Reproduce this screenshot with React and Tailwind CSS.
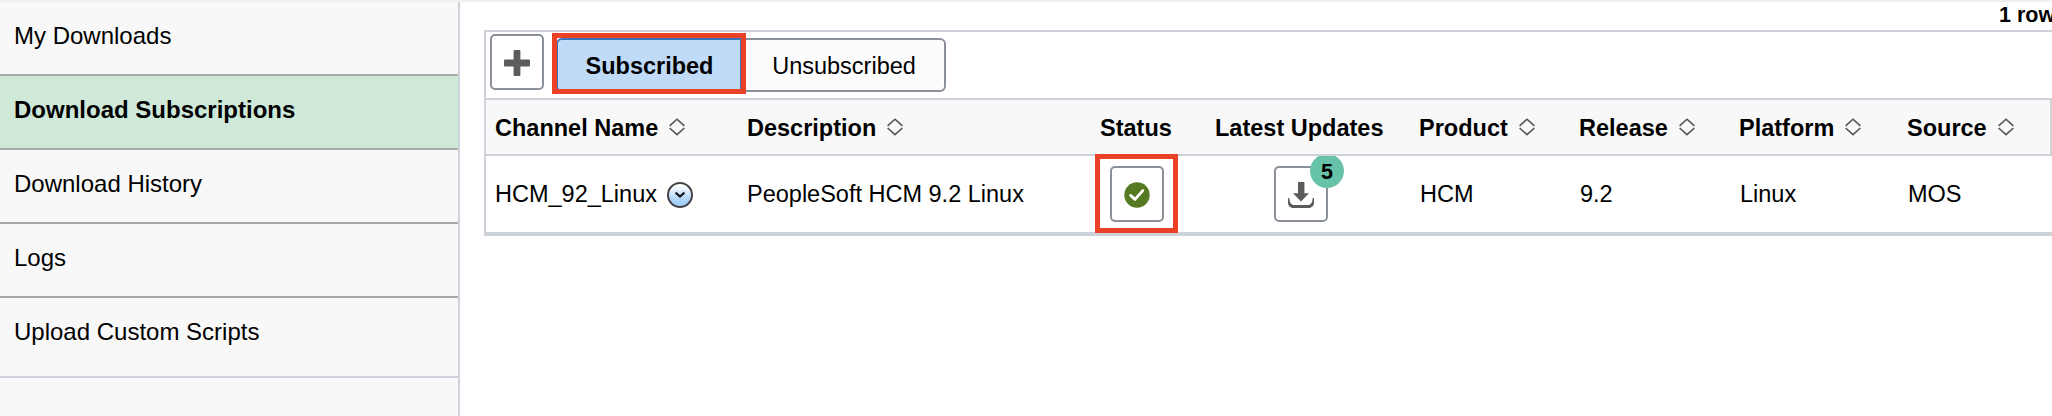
const COLUMNS = 'grid grid-cols-[252px_353px_115px_204px_160px_160px_168px_143px]';

const NAV = [
  { label: 'My Downloads' },
  { label: 'Download Subscriptions', active: true },
  { label: 'Download History' },
  { label: 'Logs' },
];

const HEADERS = [
  { label: 'Channel Name', sortable: true },
  { label: 'Description', sortable: true },
  { label: 'Status' },
  { label: 'Latest Updates' },
  { label: 'Product', sortable: true },
  { label: 'Release', sortable: true },
  { label: 'Platform', sortable: true },
  { label: 'Source', sortable: true },
];

function SortIcon() {
  return (
    <svg className="-mt-0.5 ml-[11px] h-[18px] w-4" viewBox="0 0 16 18" fill="none" stroke="#555" strokeWidth="1.6">
      <path d="M0.6 7.8 8 1.2 15.4 7.8M0.6 10 8 16.6 15.4 10" />
    </svg>
  );
}

function PlusIcon() {
  return (
    <svg className="mt-0.5 h-[26px] w-[26px]" viewBox="0 0 26 26" fill="#5c5c5c">
      <rect x="9.6" y="0" width="6.8" height="26" rx="1" />
      <rect x="0" y="9.6" width="26" height="6.8" rx="1" />
    </svg>
  );
}

function MenuIcon() {
  return (
    <svg className="mt-0.5 h-[26px] w-[26px]" viewBox="0 0 26 26" fill="none">
      <defs>
        <linearGradient id="menu-fill" x1="0" y1="0" x2="0" y2="1">
          <stop offset="0.1" stopColor="#fff" />
          <stop offset="0.7" stopColor="#add4fb" />
          <stop offset="1" stopColor="#9bcbfa" />
        </linearGradient>
      </defs>
      <circle cx="13" cy="13" r="12" fill="url(#menu-fill)" stroke="#444" strokeWidth="2" />
      <path d="M8.600 10.600 13 14.600 17.400 10.600" stroke="#1a1a1a" strokeWidth="2.200" />
    </svg>
  );
}

function CheckIcon() {
  return (
    <svg className="mt-0.5 h-[26px] w-[26px]" viewBox="0 0 26 26" fill="none">
      <circle cx="13" cy="13" r="12.7" fill="#567a22" />
      <path d="M6.600 13.400 11 17.400 18.800 8.600" stroke="#fff" strokeWidth="2.800" strokeLinecap="round" strokeLinejoin="round" />
    </svg>
  );
}

function DownloadIcon() {
  return (
    <svg className="mt-0.5 h-[26px] w-[26px]" viewBox="0 0 26 26" fill="#5c5c5c">
      <path d="M10 0h6.400v11.300H21L13 19.500 5 11.300H10z" />
      <path d="M0 16h1.300c.3 4.500 1.700 7 5.200 7h13c3.500 0 4.900-2.500 5.200-7H26v4.500c0 3-2 5.500-5.500 5.500h-15C2 26 0 23.500 0 20.500z" />
    </svg>
  );
}

function IconButton({ label, children }) {
  return (
    <button aria-label={label} className="flex h-14 w-[54px] items-center justify-center rounded-[5px] border-2 border-[#8a9099] bg-white">
      {children}
    </button>
  );
}

export default function App() {
  return (
    <div className="relative flex h-[416px] w-[2052px] flex-col overflow-hidden border-t-2 border-[#f0f0f0] bg-white font-['Liberation_Sans',Arial,sans-serif] text-[24px] leading-7 text-black">
      <div className="flex min-h-0 flex-1">
        <nav className="flex w-[460px] shrink-0 flex-col border-r-2 border-[#ced2da] bg-[#f8f8f8]">
          {NAV.map((item) => (
            <a
              key={item.label}
              className={`block h-[74px] border-b-2 border-[#a9a9a9] pt-5 pl-[14px] ${item.active ? 'bg-[#cfe9d9] font-bold' : ''}`}
            >
              {item.label}
            </a>
          ))}
          <a className="block h-20 border-b-2 border-[#ced2da] pt-5 pl-[14px]">Upload Custom Scripts</a>
        </nav>

        <main className="w-[1592px] pl-6 text-[23.5px]">
          <div className="flex h-7 justify-end overflow-hidden">
            <span className="w-[53px] whitespace-nowrap text-[21.5px] leading-[27px] font-bold">1 row</span>
          </div>
          <section className="border-t-2 border-b-4 border-l-2 border-[#ced2da]">
            <div className="flex h-[66px] items-start pt-0.5 pl-1">
              <IconButton label="Add">
                <PlusIcon />
              </IconButton>
              <div className="relative mt-1 ml-3 flex h-[54px]">
                <button className="w-[186px] rounded-l-[6px] border-2 border-[#3b73b9] bg-[#c0dbf7] pt-px pl-px font-bold">Subscribed</button>
                <button className="w-[204px] rounded-r-[6px] border-2 border-l-0 border-[#8a9099] bg-[#fcfcfc] pt-px pl-0.5">Unsubscribed</button>
                <span className="absolute -top-[5px] -left-1 h-[61px] w-[194px] border-5 border-[#eb4126]" />
              </div>
            </div>

            <div className={`${COLUMNS} h-[58px] border-y-2 border-r-2 border-[#ced2da] bg-[#f8f8f8] pl-[9px] font-bold`}>
              {HEADERS.map((h) => (
                <div key={h.label} className="flex items-center whitespace-nowrap pt-0.5">
                  {h.label}
                  {h.sortable && <SortIcon />}
                </div>
              ))}
            </div>

            <div className={`${COLUMNS} h-[76px] items-center overflow-hidden pl-[9px]`}>
              <div className="flex items-center">
                <span>HCM_92_Linux</span>
                <span className="ml-[10px]">
                  <MenuIcon />
                </span>
              </div>
              <div>PeopleSoft HCM 9.2 Linux</div>
              <div className="pl-[10px]">
                <IconButton label="Subscribed">
                  <CheckIcon />
                </IconButton>
              </div>
              <div className="relative pl-[59px]">
                <IconButton label="Download updates">
                  <DownloadIcon />
                </IconButton>
                <span className="absolute -top-3 left-[95px] flex h-[34px] w-[34px] items-center justify-center rounded-full bg-[#66c2a8] pt-0.5 text-[21.5px] font-bold">
                  5
                </span>
              </div>
              <div className="pl-px">HCM</div>
              <div className="pl-px">9.2</div>
              <div className="pl-px">Linux</div>
              <div className="pl-px">MOS</div>
            </div>
          </section>
        </main>
      </div>
      <span className="absolute top-[152px] left-[1095px] h-[79px] w-[83px] border-5 border-[#eb4126]" />
    </div>
  );
}
